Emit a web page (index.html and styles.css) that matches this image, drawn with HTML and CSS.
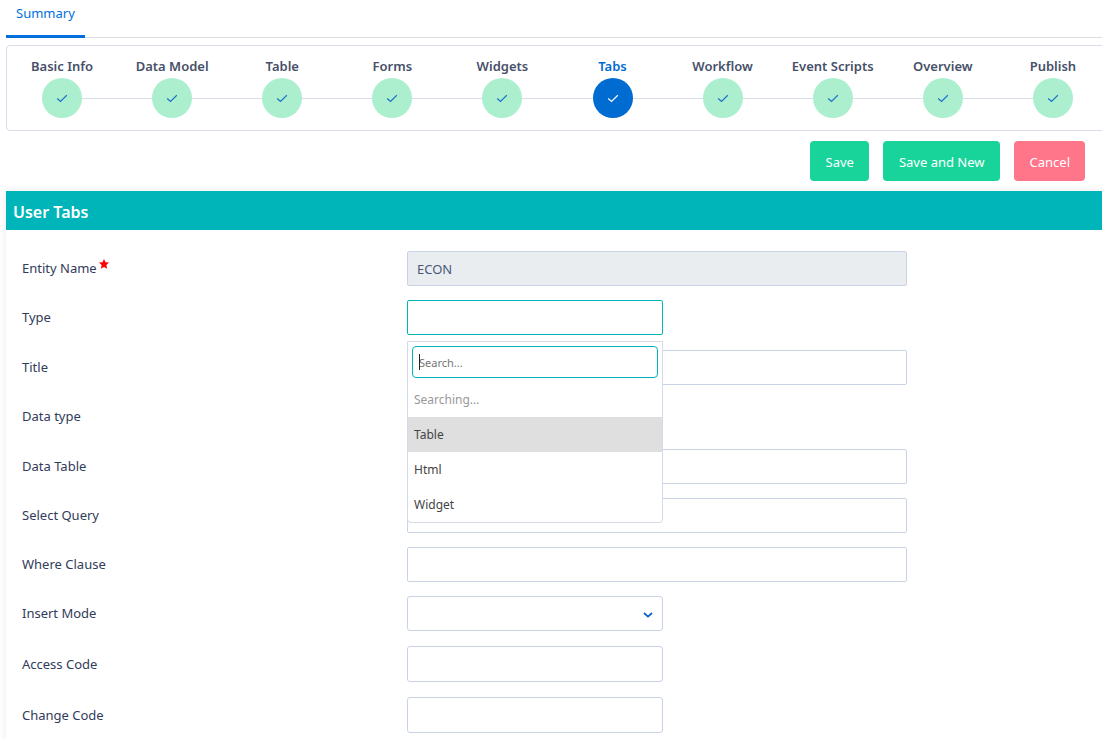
FILE: index.html
```html
<!DOCTYPE html>
<html lang="en">
<head>
<meta charset="utf-8">
<title>User Tabs</title>
<link rel="stylesheet" href="styles.css">
</head>
<body>
<svg class="sprite" aria-hidden="true">
  <symbol id="check" viewBox="0 0 12 12"><path d="M1.2 6.5 L4.5 9.4 L10.8 3.2" fill="none" stroke="currentColor" stroke-width="1.2"/></symbol>
</svg>
<main class="page">
  <nav class="tabs"><a class="tab" href="#summary" aria-current="page">Summary</a></nav>

  <ol class="steps">
    <li class="step"><span class="step-name">Basic Info</span><span class="dot"><svg class="check"><use href="#check"/></svg></span></li>
    <li class="step"><span class="step-name">Data Model</span><span class="dot"><svg class="check"><use href="#check"/></svg></span></li>
    <li class="step"><span class="step-name">Table</span><span class="dot"><svg class="check"><use href="#check"/></svg></span></li>
    <li class="step"><span class="step-name">Forms</span><span class="dot"><svg class="check"><use href="#check"/></svg></span></li>
    <li class="step"><span class="step-name">Widgets</span><span class="dot"><svg class="check"><use href="#check"/></svg></span></li>
    <li class="step step-active" aria-current="step"><span class="step-name">Tabs</span><span class="dot"><svg class="check"><use href="#check"/></svg></span></li>
    <li class="step"><span class="step-name">Workflow</span><span class="dot"><svg class="check"><use href="#check"/></svg></span></li>
    <li class="step"><span class="step-name">Event Scripts</span><span class="dot"><svg class="check"><use href="#check"/></svg></span></li>
    <li class="step"><span class="step-name">Overview</span><span class="dot"><svg class="check"><use href="#check"/></svg></span></li>
    <li class="step"><span class="step-name">Publish</span><span class="dot"><svg class="check"><use href="#check"/></svg></span></li>
  </ol>

  <div class="actions">
    <button class="btn" type="submit" form="tab-form">Save</button>
    <button class="btn" type="button">Save and New</button>
    <button class="btn btn-cancel" type="button">Cancel</button>
  </div>

  <section class="card">
    <h1 class="card-title">User Tabs</h1>
    <form class="form" id="tab-form">
      <div class="row">
        <label class="label" for="entity">Entity Name<svg class="star" viewBox="0 0 10 10" aria-hidden="true"><path d="M5 0 L6.5 3.2 L10 3.6 L7.4 6 L8.1 9.7 L5 8 L1.9 9.7 L2.6 6 L0 3.6 L3.5 3.2 Z" fill="#f00"/></svg></label>
        <input class="input" id="entity" type="text" value="ECON" disabled>
      </div>
      <div class="row row-select">
        <label class="label" for="type">Type</label>
        <div class="picker">
          <button class="input picker-button" id="type" type="button" aria-haspopup="listbox" aria-expanded="true"></button>
          <div class="menu">
            <div class="search">
              <input class="search-input" type="text" placeholder="Search..." aria-label="Search types">
              <span class="caret"></span>
            </div>
            <ul class="options" role="listbox" aria-label="Type">
              <li class="option option-muted">Searching…</li>
              <li class="option option-active" role="option" aria-selected="true">Table</li>
              <li class="option" role="option">Html</li>
              <li class="option" role="option">Widget</li>
            </ul>
          </div>
        </div>
      </div>
      <div class="row">
        <label class="label" for="title">Title</label>
        <input class="input" id="title" type="text">
      </div>
      <div class="row row-select">
        <span class="label">Data type</span>
      </div>
      <div class="row">
        <label class="label" for="data-table">Data Table</label>
        <input class="input" id="data-table" type="text">
      </div>
      <div class="row">
        <label class="label" for="query">Select Query</label>
        <input class="input" id="query" type="text">
      </div>
      <div class="row">
        <label class="label" for="where">Where Clause</label>
        <input class="input" id="where" type="text">
      </div>
      <div class="row row-select">
        <label class="label" for="mode">Insert Mode</label>
        <div class="select-wrap">
          <select class="input select" id="mode"><option></option></select>
          <svg class="chevron" viewBox="0 0 10 6" aria-hidden="true"><path d="M1 1 L5 4.6 L9 1" fill="none" stroke="currentColor" stroke-width="1.8"/></svg>
        </div>
      </div>
      <div class="row row-code">
        <label class="label" for="access">Access Code</label>
        <input class="input input-code" id="access" type="text">
      </div>
      <div class="row row-code">
        <label class="label" for="change">Change Code</label>
        <input class="input input-code" id="change" type="text">
      </div>
    </form>
  </section>
</main>
</body>
</html>
```
FILE: styles.css
```css
* { box-sizing: border-box; }

body {
  margin: 0;
  overflow: hidden;
  background: #fff;
  color: #313b5a;
  font: 13px/20px "Noto Sans", "Open Sans", sans-serif;
}

.sprite { display: none; }
.page { padding-left: 6px; }

.tabs {
  display: flex;
  height: 38px;
  border-bottom: 1px solid #dcdde2;
}
.tab {
  height: 38px;
  padding: 3px 10px 0;
  border-bottom: 3px solid #006fdd;
  color: #006fdd;
  text-decoration: none;
}

/* The stepper runs past the right edge of the page. */
.steps {
  display: flex;
  height: 86px;
  margin: 7px -7px 0 0;
  padding: 10px 0 0;
  border: 1px solid #d9dcea;
  border-radius: 4px;
  list-style: none;
}
.step {
  position: relative;
  display: flex;
  flex: 1;
  flex-direction: column;
  align-items: center;
  gap: 2px;
}
.step-name {
  color: #475069;
  font-weight: 600;
  white-space: nowrap;
}
.step:not(:last-child)::after {
  content: "";
  position: absolute;
  top: 42px;
  left: calc(50% + 20px);
  width: calc(100% - 40px);
  height: 1px;
  background: #d9dcea;
}
.dot {
  display: grid;
  place-items: center;
  width: 40px;
  height: 40px;
  border-radius: 50%;
  background: #abefce;
  color: #1d6fc9;
}
.check { width: 12px; height: 12px; }
.step-active .step-name { color: #006bd1; }
.step-active .dot { background: #006bd1; color: #fff; }

.actions {
  display: flex;
  justify-content: flex-end;
  gap: 14px;
  padding: 10px 17px 10px 0;
}
.btn {
  height: 40px;
  padding: 2px 15px 0 16px;
  border: 0;
  border-radius: 4px;
  background: #18d49b;
  color: #fff;
  font: inherit;
}
.btn-cancel { background: #ff758a; }

.card { box-shadow: 0 0 8px rgba(40, 50, 100, 0.1); }
.card-title {
  margin: 0;
  padding: 9px 7px 6px;
  background: #00b5b9;
  color: #fff;
  font-size: 16px;
  font-weight: 600;
  line-height: 24px;
}

.form {
  display: flex;
  flex-direction: column;
  gap: 14px;
  padding: 21px 0 14px 16px;
}
.row {
  display: grid;
  grid-template-columns: 385fr 500fr 195fr;
  align-items: start;
  min-height: 35px;
}
.row-select { min-height: 36px; }
.row-code { min-height: 37px; }
.label { line-height: 34px; }
.row-code .label { line-height: 36px; }
.star {
  width: 10px;
  height: 10px;
  margin-left: 2px;
  vertical-align: 4px;
}

.input {
  display: block;
  width: 100%;
  height: 35px;
  padding: 0 9px;
  border: 1px solid #cad3e5;
  border-radius: 2px;
  background: #fff;
  color: #4b5878;
  font: inherit;
}
.input:disabled { background: #eaedf0; }
.input-code { max-width: 256px; height: 36px; border-radius: 3px; }

.picker, .select-wrap {
  position: relative;
  max-width: 256px;
}
.picker-button { border-color: #00b5b9; }
.select { appearance: none; border-radius: 3px; }
.chevron {
  position: absolute;
  top: 16px;
  right: 10px;
  width: 10px;
  height: 6px;
  color: #0b63c4;
  pointer-events: none;
}

.menu {
  position: absolute;
  z-index: 1;
  top: 41px;
  left: 0;
  width: 100%;
  border: 1px solid #d5d9e8;
  border-radius: 0 0 4px 4px;
  background: #fff;
}
.search { position: relative; padding: 4px; }
.search-input {
  display: block;
  width: 100%;
  height: 32px;
  padding: 0 6px;
  border: 1px solid #00b5b9;
  border-radius: 4px;
  background: #fff;
  font: inherit;
  font-size: 11px;
}
.search-input::placeholder { color: #757575; }
.caret {
  position: absolute;
  top: 12px;
  left: 11px;
  width: 1px;
  height: 16px;
  background: #222;
}
.options { margin: 0; padding: 0; list-style: none; }
.option {
  padding: 1px 6px 0;
  color: #444;
  font-size: 12px;
  line-height: 34px;
}
.option-muted { color: #999; }
.option-active { background: #dfdfdf; }
```
